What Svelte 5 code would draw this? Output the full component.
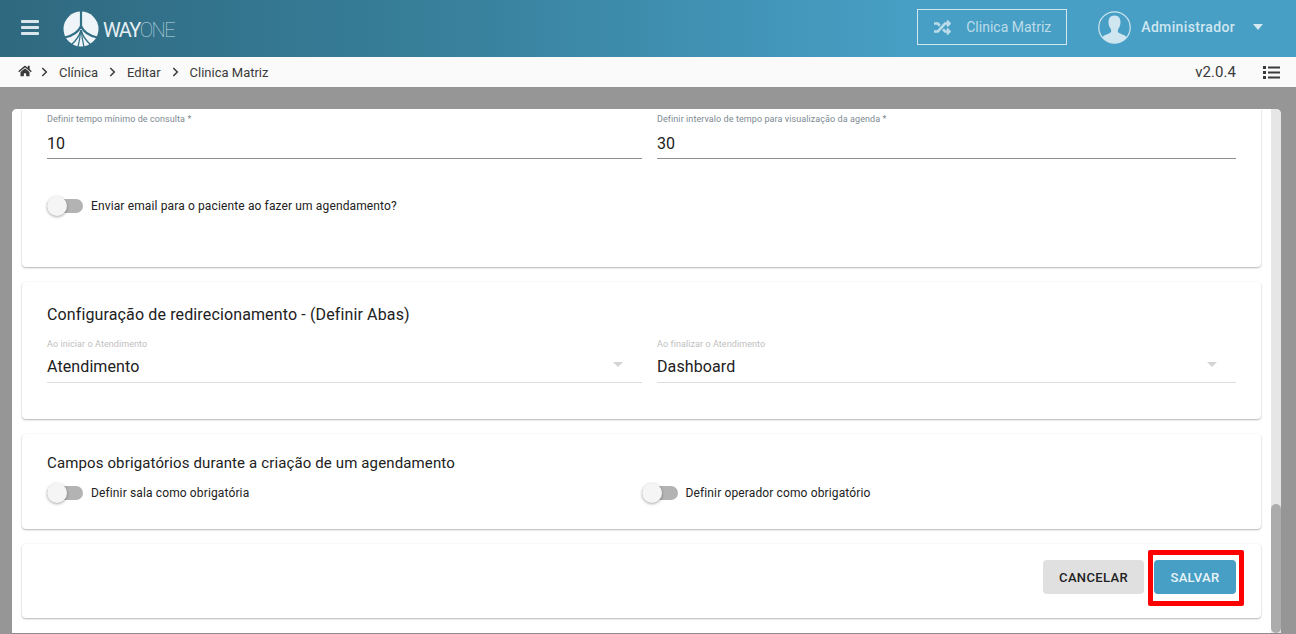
<script>
  const crumbs = ['Clínica', 'Editar', 'Clinica Matriz'];
</script>

{#snippet toggle(label)}
  <div class="toggle">
    <span class="track"><span class="thumb"></span></span>
    <span class="tlabel">{label}</span>
  </div>
{/snippet}

{#snippet field(label, value, kind)}
  <div class="field {kind}">
    <div class="flabel">{label}</div>
    <div class="fvalue">{value}</div>
    {#if kind === 'select'}<span class="caret"></span>{/if}
  </div>
{/snippet}

<div class="page">
  <header class="topbar">
    <button class="burger" aria-label="Menu"><span></span><span></span><span></span></button>
    <div class="logo">
      <svg width="36" height="36" viewBox="0 0 36 36" aria-hidden="true">
        <circle cx="18" cy="18" r="17.5" fill="#eef4f7"/>
        <g fill="none" stroke="#316f87">
          <path d="M18 0 V18" stroke-width="2.2"/>
          <path d="M18 15 C15.5 21 9 25 1.5 26.5" stroke-width="2"/>
          <path d="M18 15 C20.5 21 27 25 34.5 26.5" stroke-width="2"/>
          <path d="M18 19 C16.5 25 12.5 30 8.5 33.5" stroke-width="1.3"/>
          <path d="M18 19 C19.5 25 23.5 30 27.5 33.5" stroke-width="1.3"/>
          <path d="M17.5 21 C17 27 16 32 15 36" stroke-width="1.2"/>
          <path d="M18.5 21 C19 27 20 32 21 36" stroke-width="1.2"/>
        </g>
      </svg>
      <span class="wordmark"><b>WAY</b><i>ONE</i></span>
    </div>
    <div class="spacer"></div>
    <div class="clinic">
      <svg width="19" height="17" viewBox="0 0 512 512" aria-hidden="true"><path fill="currentColor" d="M504.971 359.029c9.373 9.373 9.373 24.569 0 33.941l-80 79.984c-15.01 15.01-40.971 4.49-40.971-16.971V416h-58.785a12.004 12.004 0 0 1-8.773-3.812l-70.556-75.596 53.333-57.143L352 336h32v-39.981c0-21.438 25.943-31.998 40.971-16.971l80 79.981zM12 176h84l52.781 56.551 53.333-57.143-70.556-75.596A11.999 11.999 0 0 0 122.785 96H12c-6.627 0-12 5.373-12 12v56c0 6.627 5.373 12 12 12zm372 0v39.984c0 21.46 25.961 31.98 40.971 16.971l80-79.984c9.373-9.373 9.373-24.569 0-33.941l-80-79.981C409.943 24.021 384 34.582 384 56.019V96h-58.785a12.004 12.004 0 0 0-8.773 3.812L96 336H12c-6.627 0-12 5.373-12 12v56c0 6.627 5.373 12 12 12h110.785c3.326 0 6.503-1.381 8.773-3.812L352 176h32z"/></svg>
      <span>Clinica Matriz</span>
    </div>
    <div class="user">
      <svg width="33" height="33" viewBox="0 0 33 33" aria-hidden="true">
        <defs><clipPath id="av"><circle cx="16.5" cy="16.5" r="15.6"/></clipPath></defs>
        <circle cx="16.5" cy="16.5" r="15.7" fill="none" stroke="#cfe6f0" stroke-width="1.2"/>
        <path clip-path="url(#av)" fill="#cfe6f0" d="M16.5 4.5c-3.9 0-6 2.8-6 6.4 0 2.6.8 5 2 6.6.6.9.7 1.6.7 2.5 0 1.3-.8 2-2.3 2.6-2.2.9-5.1 1.8-6.4 3.4v7h24v-7c-1.3-1.6-4.2-2.5-6.4-3.4-1.5-.6-2.3-1.3-2.3-2.6 0-.9.1-1.6.7-2.5 1.2-1.6 2-4 2-6.6 0-3.6-2.1-6.4-6-6.4z"/>
      </svg>
      <span class="uname">Administrador</span>
      <span class="ucaret"></span>
    </div>
  </header>

  <nav class="crumbbar">
    <svg class="home" width="14" height="12" viewBox="0 0 576 512" aria-hidden="true"><path fill="currentColor" d="M280.37 148.26L96 300.11V464a16 16 0 0 0 16 16l112.06-.29a16 16 0 0 0 15.92-16V368a16 16 0 0 1 16-16h64a16 16 0 0 1 16 16v95.64a16 16 0 0 0 16 16.05L464 480a16 16 0 0 0 16-16V300L295.67 148.26a12.19 12.19 0 0 0-15.3 0zM571.6 251.47L488 182.56V44.05a12 12 0 0 0-12-12h-56a12 12 0 0 0-12 12v72.61L318.47 43a48 48 0 0 0-61 0L4.34 251.47a12 12 0 0 0-1.6 16.9l25.5 31A12 12 0 0 0 45.15 301l235.22-193.74a12.19 12.19 0 0 1 15.3 0L530.9 301a12 12 0 0 0 16.9-1.6l25.5-31a12 12 0 0 0-1.7-16.93z"/></svg>
    {#each crumbs as c}
      <svg class="chev" width="7" height="10" viewBox="0 0 7 10" aria-hidden="true"><path d="M1.3 1 L5.3 5 L1.3 9" fill="none" stroke="currentColor" stroke-width="1.5"/></svg>
      <span class="crumb">{c}</span>
    {/each}
    <div class="spacer"></div>
    <span class="version">v2.0.4</span>
    <svg class="listicon" width="17" height="13" viewBox="0 0 17 13" aria-hidden="true">
      <path fill="#3b3b3b" d="M0 0h3v3H0zM0 5h3v3H0zM0 10h3v3H0zM5 .5h12v2H5zM5 5.5h12v2H5zM5 10.5h12v2H5z"/>
    </svg>
  </nav>

  <main class="stage">
    <div class="panel">
      <div class="scroll">
        <section class="card first">
          <div class="row two">
            {@render field('Definir tempo mínimo de consulta *', '10', 'input')}
            {@render field('Definir intervalo de tempo para visualização da agenda *', '30', 'input')}
          </div>
          <div class="single">
            {@render toggle('Enviar email para o paciente ao fazer um agendamento?')}
          </div>
        </section>

        <section class="card second">
          <h2>Configuração de redirecionamento - (Definir Abas)</h2>
          <div class="row two">
            {@render field('Ao iniciar o Atendimento', 'Atendimento', 'select')}
            {@render field('Ao finalizar o Atendimento', 'Dashboard', 'select')}
          </div>
        </section>

        <section class="card third">
          <h2>Campos obrigatórios durante a criação de um agendamento</h2>
          <div class="toggles">
            {@render toggle('Definir sala como obrigatória')}
            {@render toggle('Definir operador como obrigatório')}
          </div>
        </section>

        <section class="card actions">
          <button class="btn cancel">CANCELAR</button>
          <span class="highlight"><button class="btn save">SALVAR</button></span>
        </section>
      </div>
      <div class="scrollbar"><div class="sthumb"></div></div>
    </div>
  </main>
</div>

<style>
  :global(body) { margin: 0; font-family: Roboto, "Liberation Sans", sans-serif; }
  :global(html), :global(body) { overflow: hidden; }
  .page { width: 1296px; height: 634px; display: flex; flex-direction: column; background: #969696; overflow: hidden; }
  .spacer { flex: 1; }

  .topbar { height: 57px; flex: none; display: flex; align-items: center; background: linear-gradient(90deg, #2f697f 0%, #38809c 35%, #479fc5 70%, #479fc5 100%); color: #d6e9f2; }
  .burger { width: 18px; height: 15px; margin-left: 21px; padding: 0; border: 0; background: none; display: flex; flex-direction: column; justify-content: space-between; margin-top: -3px; }
  .burger span { display: block; height: 3px; background: #d9e6eb; border-radius: 1px; }
  .logo { margin-left: 24px; display: flex; align-items: center; margin-top: 3px; }
  .logo svg { margin-top: -3px; }
  .wordmark { margin-left: 4px; font-size: 20px; letter-spacing: -1.55px; color: #e6eff3; line-height: 1; }
  .wordmark b { font-weight: 400; }
  .wordmark i { font-style: normal; font-weight: 100; color: #c3dbe5; }

  .clinic { width: 150px; height: 36px; box-sizing: border-box; border: 1px solid #d3e7f0; display: flex; align-items: center; gap: 14px; padding-left: 15px; font-size: 14px; color: #bcdcea; margin-top: -3px; }
  .user { display: flex; align-items: center; margin-left: 31px; margin-right: 33px; margin-top: -3px; }
  .uname { margin-left: 10px; font-size: 14px; font-weight: 500; letter-spacing: .35px; color: #cfe6f0; }
  .ucaret { margin-left: 18px; width: 0; height: 0; border-left: 5.5px solid transparent; border-right: 5.5px solid transparent; border-top: 6px solid #d6e9f2; }

  .crumbbar { height: 30px; flex: none; background: #fafafa; display: flex; align-items: center; color: #3b3b3b; font-size: 13px; }
  .home { margin-left: 18px; margin-top: -3px; }
  .chev { margin-left: 9px; margin-right: 11px; margin-top: -1px; }
  .crumb + .chev { margin-left: 11px; }
  .version { font-size: 15px; letter-spacing: .05px; }
  .listicon { margin-left: 27px; margin-right: 16px; }

  .stage { flex: 1; min-height: 0; padding: 22px 15px 0 12px; }
  .panel { height: 100%; background: #fff; border-radius: 5px 5px 0 0; display: flex; overflow: hidden; border-bottom: 1px solid #8a8a8a; box-sizing: border-box; }
  .scroll { flex: 1; min-width: 0; padding: 0 10px; background: #fff; }
  .scrollbar { width: 10px; flex: none; background: #e6e6e6; position: relative; display: flex; flex-direction: column; justify-content: flex-end; }
  .sthumb { height: 129px; background: #acacac; border-radius: 5px; }

  .card { background: #fff; border-radius: 4px; box-shadow: 0 1px 2px rgba(0,0,0,.28), 0 0 2px rgba(0,0,0,.05); margin-bottom: 15px; box-sizing: border-box; padding: 0 25px; }
  .card.first { height: 158px; border-radius: 0 0 4px 4px; }
  .card.second { height: 137px; padding-top: 23px; }
  .card.third { height: 95px; padding-top: 20px; }
  .card.actions { height: 74px; margin-bottom: 0; padding: 0; display: flex; justify-content: flex-end; align-items: flex-start; }

  h2 { margin: 0; font-size: 16px; font-weight: 400; line-height: 19px; color: #212121; letter-spacing: .13px; }
  .third h2 { font-size: 15px; letter-spacing: .13px; }

  .row.two { display: flex; gap: 15px; }
  .field { position: relative; box-sizing: border-box; }
  .field:first-child { width: 595px; }
  .field:last-child { width: 579px; }
  .flabel { font-size: 9px; line-height: 11px; color: #7d8a92; letter-spacing: .08px; }
  .fvalue { font-size: 16px; line-height: 19px; color: #212121; padding-top: 9px; padding-bottom: 5px; border-bottom: 1px solid #8f8f8f; letter-spacing: .1px; }
  .first .field { margin-top: 5px; }

  .second .row { margin-top: 15px; }
  .select .flabel { color: #c0c0c0; }
  .select .fvalue { border-bottom-color: #dcdcdc; padding-top: 7px; padding-bottom: 6px; }
  .caret { position: absolute; right: 19px; top: 23px; width: 0; height: 0; border-left: 5px solid transparent; border-right: 5px solid transparent; border-top: 5px solid #d4d4d4; }

  .single { margin-top: 37px; }
  .toggle { display: flex; align-items: center; height: 20px; }
  .track { position: relative; width: 36px; height: 14px; background: #b3b3b3; border-radius: 7px; flex: none; }
  .thumb { position: absolute; left: 0; top: -3px; width: 20px; height: 20px; border-radius: 50%; background: #f5f5f5; box-shadow: 0 1px 3px rgba(0,0,0,.35); }
  .tlabel { margin-left: 8px; font-size: 12px; color: #212121; letter-spacing: .13px; }
  .toggles { display: flex; margin-top: 9px; }
  .toggles .toggle { width: 595px; margin-top: 1px; }

  .btn { border: 0; border-radius: 4px; height: 34px; padding: 0; font: 500 13px Roboto, sans-serif; letter-spacing: .35px; }
  .cancel { width: 101px; background: #e0e0e0; color: #222; margin-top: 16px; }
  .highlight { display: block; margin-top: 6px; margin-left: 4px; margin-right: 17px; padding: 5px 3px 7px 1px; border: 5px solid #f00; border-radius: 2px; line-height: 0; }
  .save { width: 82px; background: #479fc5; color: #e8f3f8; }
</style>
